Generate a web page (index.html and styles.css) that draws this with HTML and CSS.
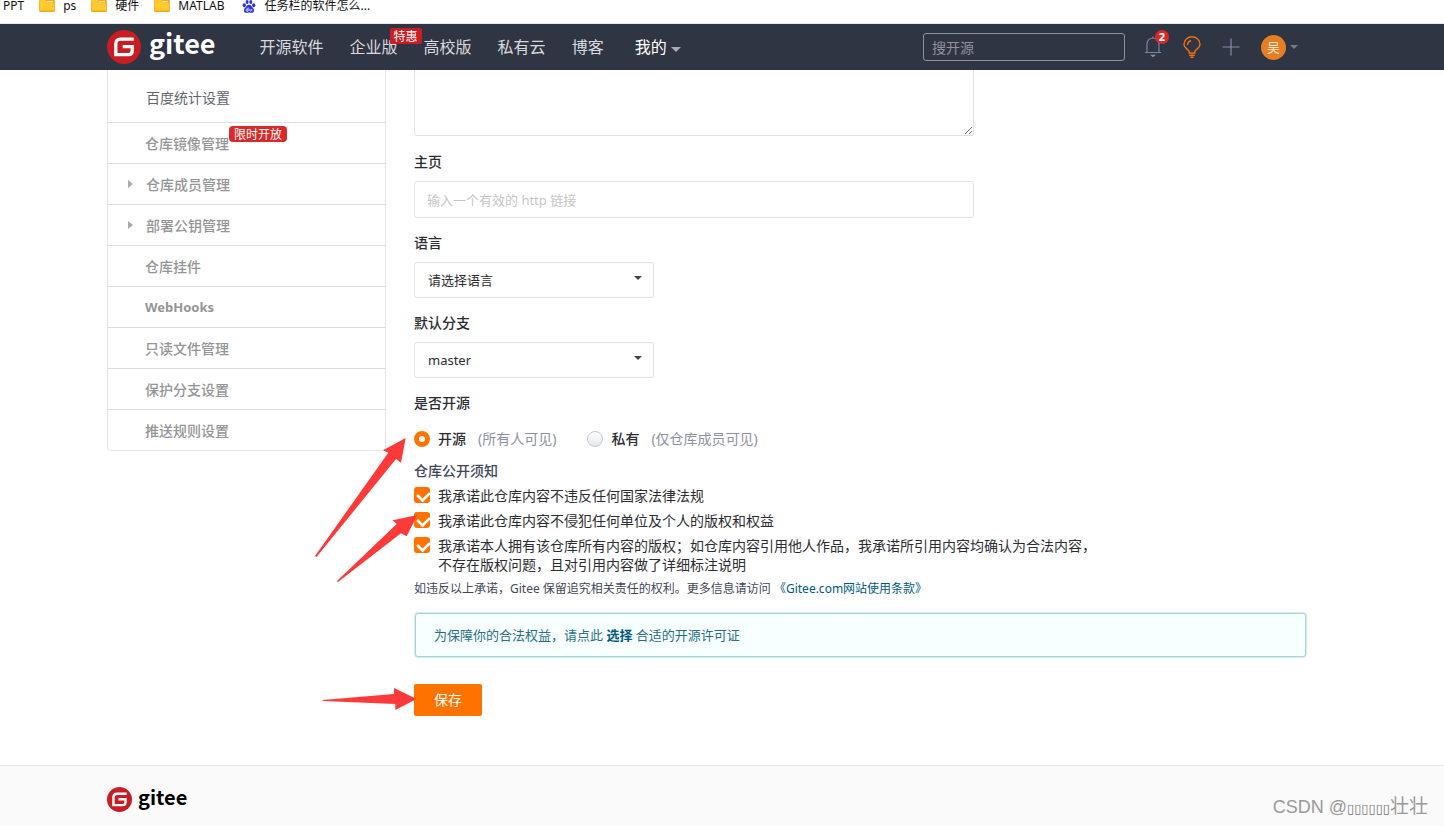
FILE: index.html
```html
<!DOCTYPE html>
<html lang="zh-CN">
<head>
<meta charset="utf-8">
<meta name="viewport" content="width=device-width, initial-scale=1">
<title>仓库设置 - Gitee</title>
<link rel="stylesheet" href="styles.css">
</head>
<body>
<svg class="sprite" aria-hidden="true">
  <symbol id="folder" viewBox="0 0 17 13">
    <path fill="#f5a71c" d="M1 0h15a1 1 0 0 1 1 1v11a1 1 0 0 1-1 1H1a1 1 0 0 1-1-1V1a1 1 0 0 1 1-1z"/>
    <path fill="#ffca2c" d="M1 0h7v3h8v8.500H1z"/>
    <path fill="#ffe69a" d="M8.500 1h6.500v1.500H8.500z"/>
  </symbol>
  <symbol id="mark" viewBox="0 0 34 34">
    <circle cx="17" cy="17" r="17" fill="#c71d23"/>
    <path fill="none" stroke="#fff" stroke-width="3.300" d="M26.700 9.200H13.500q-4.700 0-4.700 4.700v10.700h12.700q3.700 0 3.700-3.700v-4.300h-9.500"/>
  </symbol>
</svg>

<nav class="bookmarks" aria-label="书签栏">
  <a href="#">PPT</a>
  <a href="#"><svg class="folder"><use href="#folder"/></svg>ps</a>
  <a href="#"><svg class="folder"><use href="#folder"/></svg>硬件</a>
  <a href="#"><svg class="folder"><use href="#folder"/></svg>MATLAB</a>
  <a href="#"><svg class="paw" viewBox="0 0 14 14" fill="#2932e1"><ellipse cx="1.900" cy="5.600" rx="1.700" ry="2.100"/><ellipse cx="5" cy="2.200" rx="1.600" ry="2.200"/><ellipse cx="9" cy="2.200" rx="1.600" ry="2.200"/><ellipse cx="12.100" cy="5.600" rx="1.700" ry="2.100"/><path d="M7 5.200c2.200 0 2.700 2 4.100 3.200 2.300 2 1.400 5.600-1.100 5.400-1.200 0-1.800-.3-3-.3s-1.800.3-3 .3c-2.500.200-3.400-3.400-1.100-5.400C4.300 7.200 4.800 5.200 7 5.200z"/><path fill="none" stroke="#fff" stroke-width=".9" d="M6 8v4H4.700c-1.300 0-1.300-2.200 0-2.200H6M8 9.500v1.800c0 .9 1.800.9 2 0V9.500"/></svg>任务栏的软件怎么...</a>
</nav>

<header class="topbar">
  <div class="container topbar-inner">
    <a class="brand" href="#"><svg class="brand-mark"><use href="#mark"/></svg><span>gitee</span></a>
    <nav class="menu">
      <a href="#">开源软件</a>
      <a href="#">企业版<em class="promo">特惠</em></a>
      <a href="#">高校版</a>
      <a href="#">私有云</a>
      <a href="#">博客</a>
      <a class="mine" href="#">我的<i class="caret"></i></a>
    </nav>
    <input class="search" type="text" placeholder="搜开源" aria-label="搜开源">
    <div class="tools">
      <button class="tool" type="button" aria-label="通知">
        <svg width="18" height="22" viewBox="0 0 18 22"><path fill="none" stroke="#7486a8" stroke-width="1.200" d="M1 16.500h16M3 16.500V8.500q0-6 6-6.500 6 .500 6 6.500v8M9 2V.5"/><path fill="#8c92a4" d="M6 18.800h6l-3 2.500z"/></svg>
        <span class="count">2</span>
      </button>
      <button class="tool" type="button" aria-label="动态">
        <svg width="18" height="22" viewBox="0 0 18 22"><path fill="none" stroke="#f07010" stroke-width="1.400" d="M6.200 17v-1.200C6 13.500 1 12.300 1 8.500a8 7.700 0 0 1 16 0c0 3.800-5 5-5.200 7.300V17zM6.200 19.200h5.600M7.300 21.200h3.400M4.500 9q0-3.500 3.700-4.200"/></svg>
      </button>
      <button class="tool" type="button" aria-label="新建">
        <svg width="18" height="18" viewBox="0 0 18 18"><path stroke="#8f88ad" stroke-width="1.200" d="M9 .5v17M.5 9h17"/></svg>
      </button>
      <button class="user" type="button" aria-label="账户"><span class="avatar">吴</span><i class="caret caret-dim"></i></button>
    </div>
  </div>
</header>

<main class="page">
  <div class="container columns">
    <aside class="sidebar">
      <a class="sub" href="#">百度统计设置</a>
      <a href="#">仓库镜像管理<em class="limited">限时开放</em></a>
      <a class="group" href="#">仓库成员管理</a>
      <a class="group" href="#">部署公钥管理</a>
      <a href="#">仓库挂件</a>
      <a class="latin" href="#">WebHooks</a>
      <a href="#">只读文件管理</a>
      <a href="#">保护分支设置</a>
      <a href="#">推送规则设置</a>
    </aside>

    <form class="settings">
      <textarea class="intro" aria-label="介绍"></textarea>

      <label class="title" for="homepage">主页</label>
      <input class="text" id="homepage" type="text" placeholder="输入一个有效的 http 链接">

      <label class="title" for="language">语言</label>
      <div class="picker"><select id="language"><option>请选择语言</option></select></div>

      <label class="title" for="branch">默认分支</label>
      <div class="picker"><select id="branch"><option>master</option></select></div>

      <div class="title">是否开源</div>
      <div class="radios">
        <label><input type="radio" name="visibility" checked><b>开源</b><span>(所有人可见)</span></label>
        <label><input type="radio" name="visibility"><b>私有</b><span>(仅仓库成员可见)</span></label>
      </div>

      <div class="notice-title">仓库公开须知</div>
      <div class="promises">
        <label><input type="checkbox" checked><span>我承诺此仓库内容不违反任何国家法律法规</span></label>
        <label><input type="checkbox" checked><span>我承诺此仓库内容不侵犯任何单位及个人的版权和权益</span></label>
        <label><input type="checkbox" checked><span>我承诺本人拥有该仓库所有内容的版权；如仓库内容引用他人作品，我承诺所引用内容均确认为合法内容，<br>不存在版权问题，且对引用内容做了详细标注说明</span></label>
      </div>
      <p class="terms">如违反以上承诺，Gitee 保留追究相关责任的权利。更多信息请访问 <a href="#">《Gitee.com网站使用条款》</a></p>

      <div class="license">为保障你的合法权益，请点此 <a href="#">选择</a> 合适的开源许可证</div>
      <button class="save" type="submit">保存</button>
    </form>

    <svg class="arrows" viewBox="310 430 110 290" aria-hidden="true">
      <path fill="#fc3a3a" d="M315 556L388.300 452.700 383 450.300 405.700 438 401 462.700 396 459 316.500 557zM337 581L396.700 524 392.700 520.300 417.300 515 406.700 536.300 401 533.300 338 582zM322.700 700L394 694V688L416.700 699 395.300 710V704L322.700 701z"/>
    </svg>
  </div>
</main>

<footer class="footer">
  <div class="container">
    <a class="brand brand-small" href="#"><svg class="brand-mark"><use href="#mark"/></svg><span>gitee</span></a>
  </div>
  <div class="watermark">CSDN @<span class="boxes">▯▯▯▯▯▯</span><span class="name">壮壮</span></div>
</footer>
</body>
</html>
```
FILE: styles.css
```css
* { box-sizing: border-box; }
body {
  margin: 0;
  min-height: 100vh;
  display: flex;
  flex-direction: column;
  background: #fff;
  color: #2b2d33;
  font: 14px/20px "Noto Sans", "Noto Sans CJK SC", sans-serif;
}
a { color: inherit; text-decoration: none; }
em { font-style: normal; }
button, input, select, textarea { font: inherit; color: inherit; margin: 0; }
.sprite { position: absolute; width: 0; height: 0; }
.container { width: 100%; max-width: 1200px; margin: 0 auto; }

.bookmarks {
  display: flex;
  align-items: flex-start;
  gap: 15px;
  height: 24px;
  padding-left: 3px;
  border-bottom: 1px solid #e6e8ee;
  color: #111;
  font-size: 12px;
  line-height: 12px;
}
.bookmarks a { display: flex; gap: 8px; }
.folder { width: 16px; height: 12px; }
.paw { width: 14px; height: 13px; margin: 0 1px 0 2px; }

.topbar { background: #2f3542; padding-right: 30px; }
.topbar-inner { display: flex; align-items: center; height: 46px; }
.brand {
  display: flex;
  align-items: center;
  gap: 8px;
  color: #fff;
  font: 700 27px/34px "Noto Sans CJK SC", sans-serif;
}
.brand span { padding-bottom: 8px; }
.brand-mark { width: 34px; height: 34px; }
.menu {
  display: flex;
  gap: 26px;
  margin-left: 44px;
  color: #d8dade;
  font-size: 16px;
  line-height: 24px;
}
.menu a { position: relative; white-space: nowrap; }
.menu .mine { padding-left: 5px; color: #fff; }
.promo {
  position: absolute;
  left: 40px;
  top: -7px;
  padding: 1px 4px 0;
  border-radius: 2px;
  background: #c71d23;
  color: #fff;
  font-size: 12px;
  line-height: 15px;
}
.caret {
  display: inline-block;
  margin-left: 4px;
  border: solid transparent;
  border-width: 5px 5px 0;
  border-top-color: #a9acb5;
  vertical-align: 1px;
}
.caret-dim { border-width: 4px 4px 0; border-top-color: #747b8c; }
.search {
  width: 202px;
  height: 28px;
  margin-left: auto;
  padding: 0 8px;
  border: 1px solid #8c92a4;
  border-radius: 3px;
  background: transparent;
  color: #fff;
}
.search::placeholder { color: #8f929b; opacity: 1; }
.tools { display: flex; align-items: center; gap: 21px; margin: 0 9px 0 19px; }
.tool, .user {
  position: relative;
  display: flex;
  align-items: center;
  padding: 0;
  border: 0;
  background: none;
}
.count {
  position: absolute;
  left: 11px;
  top: -6px;
  width: 14px;
  height: 14px;
  border-radius: 50%;
  background: #db2828;
  color: #fff;
  font-size: 11px;
  font-weight: 700;
  line-height: 14px;
}
.avatar {
  width: 25px;
  height: 25px;
  border-radius: 50%;
  background: #e67e22;
  color: #fbe6d2;
  font-size: 13px;
  line-height: 25px;
}

.page { flex: 1 0 auto; padding-right: 30px; }
.columns { position: relative; display: flex; align-items: flex-start; gap: 28px; }
.sidebar {
  flex: 0 0 279px;
  border: 1px solid #e3e5e8;
  border-top: 0;
  border-radius: 0 0 4px 4px;
  color: #959595;
  font-weight: 500;
}
.sidebar a {
  position: relative;
  display: block;
  padding: 1px 0 0 37px;
  border-top: 1px solid #dcdddf;
  line-height: 39px;
}
.sidebar .sub {
  padding: 8px 0 5px 38px;
  border-top: 0;
  color: #606672;
  font-weight: 400;
}
.sidebar .group { padding-left: 38px; }
.sidebar .latin { font-weight: 700; font-size: 13px; }
.group::before {
  content: "";
  position: absolute;
  left: 20px;
  top: 16px;
  border: solid transparent;
  border-width: 4px 0 4px 5px;
  border-left-color: #aaa;
}
.limited {
  position: absolute;
  left: 121px;
  top: 3px;
  padding: 1px 5px 0;
  border-radius: 4px;
  background: #db2828;
  color: #fff;
  font-size: 12px;
  font-weight: 400;
  line-height: 15px;
}

.settings { flex: 1; min-width: 0; display: flex; flex-direction: column; align-items: flex-start; }
.intro, .text, .picker select {
  border: 1px solid #dfe1e8;
  border-radius: 3px;
  background: #fff;
  font-size: 13px;
}
.intro {
  width: 100%;
  max-width: 560px;
  height: 66px;
  margin-bottom: 1px;
  border-top: 0;
  border-radius: 0 0 3px 3px;
  resize: vertical;
}
.title { margin: 15px 0 9px; font-weight: 500; }
.text { width: 100%; max-width: 560px; height: 37px; padding: 0 12px; }
.text::placeholder { color: #c6c6c6; opacity: 1; }
.picker { position: relative; }
.picker select { display: block; width: 240px; height: 36px; padding: 0 13px; appearance: none; }
.picker::after {
  content: "";
  position: absolute;
  right: 12px;
  top: 14px;
  border: solid transparent;
  border-width: 4px 4px 0;
  border-top-color: #444;
  pointer-events: none;
}
.radios { display: flex; gap: 31px; margin-top: 7px; }
.radios label { display: flex; align-items: center; }
.radios b { margin: 0 12px 0 8px; font-weight: 500; }
.radios span { color: #8c92a4; }
.radios input, .promises input { flex: none; width: 16px; height: 16px; appearance: none; }
.radios input {
  border: 1px solid #c4c6ca;
  border-radius: 50%;
  background: linear-gradient(#fff, #e4e7ec);
}
.radios input:checked { border: 5px solid #fe7300; background: #fff; }
.notice-title { margin: 12px 0 5px; color: #40485b; font-weight: 500; }
.promises { display: flex; flex-direction: column; gap: 6px; line-height: 19px; }
.promises label { display: flex; align-items: flex-start; gap: 8px; }
.promises input { position: relative; margin-top: 1px; border-radius: 3px; background: #fe7300; }
.promises input::after {
  content: "";
  position: absolute;
  left: 3px;
  top: 3px;
  width: 10px;
  height: 7px;
  border: solid #fff;
  border-width: 0 0 3px 3px;
  transform: rotate(-45deg) scale(0.9);
}
.terms { margin: 5px 0 14px; color: #40485b; font-size: 12px; }
.terms a { color: #005980; }
.license {
  align-self: stretch;
  margin: 0 1px;
  padding: 11px 18px;
  border: 1px solid #a3d3dc;
  border-radius: 3px;
  background: #f8ffff;
  box-shadow: 0 0 1px 1px #d6e9ef;
  color: #276f86;
  font-size: 13px;
}
.license a { color: #005980; font-weight: 700; }
.save {
  width: 68px;
  height: 32px;
  margin: 27px 0 49px;
  border: 0;
  border-radius: 2px;
  background: #fe7300;
  color: #fff;
}
.arrows { position: absolute; left: 203px; top: 360px; width: 110px; height: 290px; pointer-events: none; }

.footer {
  position: relative;
  height: 61px;
  padding: 18px 30px 0 0;
  border-top: 1px solid #e6e8eb;
  background: #fafafa;
}
.brand-small { gap: 6px; width: max-content; color: #000; font-size: 20px; line-height: 25px; }
.brand-small span { padding-bottom: 6px; }
.brand-small .brand-mark { width: 25px; height: 25px; }
.watermark {
  position: absolute;
  right: 16px;
  bottom: 4px;
  color: #999;
  font: 18px/26px "Liberation Sans", sans-serif;
}
.watermark .boxes { color: #777; font-family: "DejaVu Sans", sans-serif; font-size: 13px; }
.watermark .name { font-family: "Noto Sans CJK SC", sans-serif; font-size: 19px; font-weight: 400; }
```
